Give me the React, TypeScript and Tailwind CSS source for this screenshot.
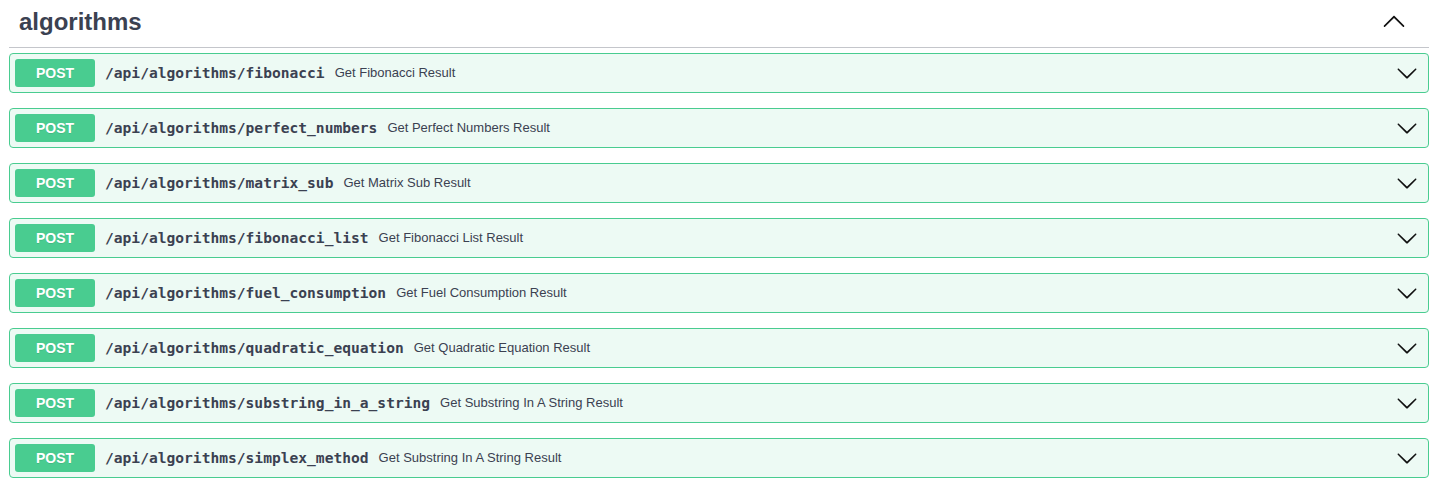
const endpoints = [
  { path: "/api/algorithms/fibonacci", summary: "Get Fibonacci Result" },
  { path: "/api/algorithms/perfect_numbers", summary: "Get Perfect Numbers Result" },
  { path: "/api/algorithms/matrix_sub", summary: "Get Matrix Sub Result" },
  { path: "/api/algorithms/fibonacci_list", summary: "Get Fibonacci List Result" },
  { path: "/api/algorithms/fuel_consumption", summary: "Get Fuel Consumption Result" },
  { path: "/api/algorithms/quadratic_equation", summary: "Get Quadratic Equation Result" },
  { path: "/api/algorithms/substring_in_a_string", summary: "Get Substring In A String Result" },
  { path: "/api/algorithms/simplex_method", summary: "Get Substring In A String Result" },
];

function Arrow({ up = false, size = 20 }: { up?: boolean; size?: number }) {
  return (
    <svg
      width={size}
      height={size}
      viewBox="0 0 20 20"
      className={up ? "rotate-180" : ""}
      fill="#111"
      aria-hidden="true"
    >
      <path d="M17.418 6.109c.272-.268.709-.268.979 0s.271.701 0 .969l-7.908 7.83c-.27.268-.707.268-.979 0l-7.908-7.83c-.27-.268-.27-.701 0-.969.271-.268.709-.268.979 0L10 13.25l7.418-7.141z" />
    </svg>
  );
}

function Operation({ path, summary }: { path: string; summary: string }) {
  return (
    <div className="flex h-[40px] items-center rounded-[4px] border border-[#49cc90] bg-[#edfaf4] pl-[5px] pr-[10px]">
      <span className="flex h-[28px] w-[80px] shrink-0 items-center justify-center rounded-[3px] bg-[#49cc90] text-[14px] font-bold text-white [font-family:'Liberation_Sans',Arial,sans-serif] [text-shadow:0_1px_0_rgba(0,0,0,0.1)]">
        POST
      </span>
      <span className="mx-[10px] text-[14.6px] font-bold text-[#3b4151] [font-family:'DejaVu_Sans_Mono',monospace]">
        {path}
      </span>
      <span className="flex-1 text-[13px] text-[#3b4151] [font-family:'Liberation_Sans',Arial,sans-serif]">
        {summary}
      </span>
      <Arrow size={22} />
    </div>
  );
}

export default function App() {
  return (
    <div className="min-h-[490px] bg-white pl-[9px] pr-[7px]">
      <div className="flex h-[48px] items-center border-b border-[#c4c6cb] pb-[3px] pl-[10px] pr-[23px]">
        <h3 className="flex-1 text-[24px] font-bold leading-[28px] text-[#3b4151] [font-family:'Liberation_Sans',Arial,sans-serif]">
          algorithms
        </h3>
        <Arrow up size={24} />
      </div>
      <div className="flex flex-col gap-[15px] pt-[5px]">
        {endpoints.map((e) => (
          <Operation key={e.path} path={e.path} summary={e.summary} />
        ))}
      </div>
    </div>
  );
}
